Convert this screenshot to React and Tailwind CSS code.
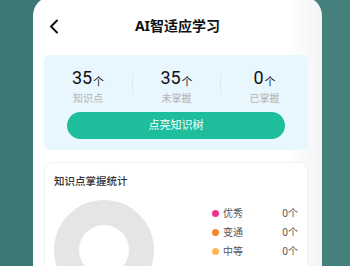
export default function App() {
  const stats = [
    { num: "35", label: "知识点" },
    { num: "35", label: "未掌握" },
    { num: "0", label: "已掌握" },
  ];
  const legend = [
    { name: "优秀", color: "bg-[#f0338a]" },
    { name: "变通", color: "bg-[#f0872c]" },
    { name: "中等", color: "bg-[#fdb65a]" },
  ];

  return (
    <div className="w-[350px] h-[266px] overflow-hidden bg-gradient-to-r from-[#3b7875] to-[#46817e] font-['Noto_Sans','Noto_Sans_CJK_SC',sans-serif]">
      <div className="ml-[33px] -mt-1 w-[289px] h-[290px] rounded-t-[20px] bg-[linear-gradient(90deg,#ffffff_88%,#f3f4f6)] pl-[11px] pr-[14px] pt-4">
        {/* HEADER */}
        <div className="relative h-7 flex items-center justify-center -ml-[11px] -mr-[14px]">
          <svg className="absolute left-[16px] top-[7px]" width="10" height="15" viewBox="0 0 10 15" fill="none">
            <path d="M8 1.5L2 7.5L8 13.5" stroke="#111" strokeWidth="2" strokeLinecap="round" strokeLinejoin="round" />
          </svg>
          <span className="text-[14px] font-bold text-[#111] leading-none">AI智适应学习</span>
        </div>

        {/* BLUE CARD */}
        <div className="mt-[15px] h-[95px] rounded-md bg-[#e8f6fe] pt-[11px]">
          <div className="flex items-start">
            {stats.map((s, i) => (
              <div key={i} className="flex flex-1 items-start">
                {i > 0 && <div className="w-px h-[22px] mt-[7px] bg-[#dfe8ee]" />}
                <div className="flex-1 flex flex-col items-center">
                  <div className="h-6 flex items-end leading-none">
                    <span className="text-[18px] text-[#111] font-['Roboto',sans-serif] leading-6">{s.num}</span>
                    <span className="text-[11px] text-[#222] mb-[3px] ml-px">个</span>
                  </div>
                  <span className="mt-px text-[10px] leading-[14px] text-[#b3b3b3]">{s.label}</span>
                </div>
              </div>
            ))}
          </div>
          <div className="mt-[7px] mx-[23px] h-[27px] rounded-full bg-[#1ebd9b] flex items-center justify-center">
            <span className="text-[11px] text-white">点亮知识树</span>
          </div>
        </div>

        {/* STATS CARD */}
        <div className="mt-3 h-[120px] rounded-lg border border-[#f0f0f0] bg-white px-[9px] pt-[10px]">
          <div className="text-[10.5px] leading-4 text-[#333] font-medium">知识点掌握统计</div>
          <div className="mt-[11px] flex">
            <div className="w-[100px] h-[100px] rounded-full bg-[#e5e5e5] flex items-center justify-center">
              <div className="w-[50px] h-[50px] rounded-full bg-white" />
            </div>
            <div className="ml-auto w-[86px] mt-1 flex flex-col">
              {legend.map((l) => (
                <div key={l.name} className="h-[19px] flex items-center">
                  <span className={`w-[7px] h-[7px] rounded-full ${l.color}`} />
                  <span className="ml-1 text-[10px] text-[#555]">{l.name}</span>
                  <span className="ml-auto text-[10px] text-[#555]">0个</span>
                </div>
              ))}
            </div>
          </div>
        </div>
      </div>
    </div>
  );
}
